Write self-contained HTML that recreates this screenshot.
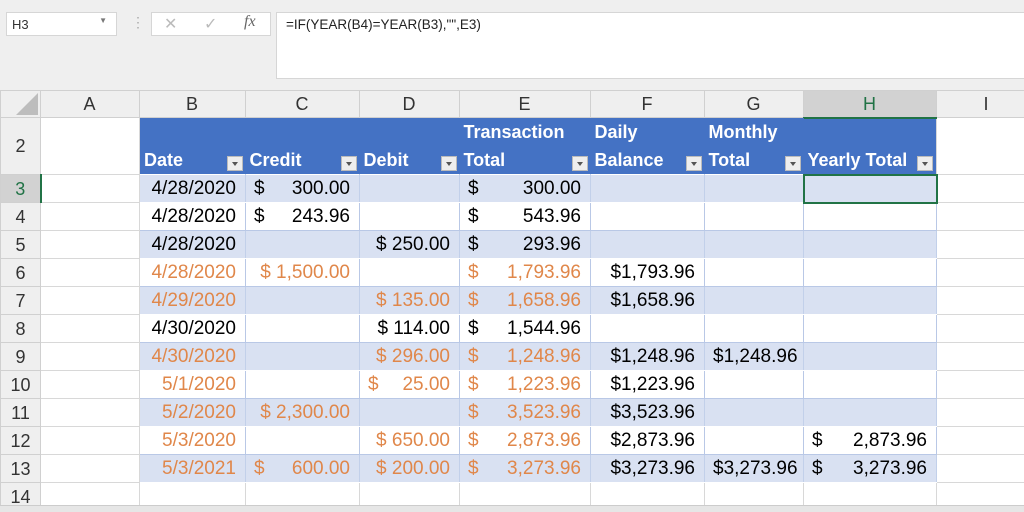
<!DOCTYPE html>
<html><head><meta charset="utf-8"><style>
*{margin:0;padding:0;box-sizing:border-box}
body{width:1024px;height:512px;overflow:hidden;background:#fff;font-family:"Liberation Sans",sans-serif;position:relative}
.top{position:absolute;left:0;top:0;width:1024px;height:92px;background:#efefef}
.nb{position:absolute;left:6px;top:12px;width:111px;height:24px;background:#fff;border:1px solid #d6d6d6;font-size:13px;padding:4px 5px;color:#333}
.nb span{position:absolute;right:9px;top:3px;font-size:8px;color:#777}
.fx{position:absolute;left:151px;top:12px;width:120px;height:24px;background:#fff;border:1px solid #d6d6d6;color:#bbb;font-size:16px}
.fb{position:absolute;left:276px;top:12px;width:760px;height:67px;background:#fff;border:1px solid #d6d6d6;font-size:13.5px;padding:4px 9px;color:#222}
table{position:absolute;left:0;top:90px;width:1036px;border-collapse:collapse;table-layout:fixed;font-size:19px}
td{border:1px solid #d8d8d8;height:28px;white-space:nowrap;overflow:hidden;position:relative;padding:0 9px 0 8px;line-height:26px}
tr.ch td{height:27px;line-height:24px;background:#efefef;text-align:center;color:#333;font-size:18px;border-color:#d0d0d0}
td.rh{background:#efefef;text-align:center;color:#333;font-size:18px;border-color:#d0d0d0;padding:0}
tr.hd td.t{background:#4472c4;color:#fff;font-weight:bold;font-size:18px;border:none;vertical-align:bottom;line-height:28px;padding:0 4px;white-space:normal}
.fl{position:absolute;right:3px;bottom:3px;width:16px;height:15px;background:#eee;border:1px solid #bbb}
.fl:after{content:"";position:absolute;left:4px;top:5px;border:3px solid transparent;border-top:4px solid #555}
tr.b td.t{background:#d9e1f2}
td.t{border-color:#b9c8e6}
tr.b td.t{border-color:#fff #c2d0ea}
.o{color:#e0874a}
.r{text-align:right}
.d{float:left}
</style></head><body>
<div class="top">
<div class="nb">H3<span>▼</span></div>
<div style="position:absolute;left:131px;top:14px;color:#aaa;font-size:14px">⋮</div>
<div class="fx"><span style="position:absolute;left:12px;top:1px">✕</span><span style="position:absolute;left:52px;top:1px">✓</span><span style="position:absolute;left:92px;top:0;color:#666;font-family:'Liberation Serif',serif;font-style:italic">fx</span></div>
<div class="fb">=IF(YEAR(B4)=YEAR(B3),"",E3)</div>
</div>
<table>
<colgroup><col style="width:40px"><col style="width:99px"><col style="width:106px"><col style="width:114px"><col style="width:100px"><col style="width:131px"><col style="width:114px"><col style="width:99px"><col style="width:133px"><col style="width:100px"></colgroup>
<tr class="ch"><td style="position:relative"><div style="position:absolute;right:2px;bottom:2px;border-left:22px solid transparent;border-bottom:22px solid #bdbdbd"></div></td><td>A</td><td>B</td><td>C</td><td>D</td><td>E</td><td>F</td><td>G</td><td style="background:#d2d2d2;color:#217346;border-bottom:2px solid #217346">H</td><td>I</td></tr>
<tr class="hd" style="height:56px"><td class="rh">2</td><td></td><td class="t">Date<div class="fl"></div></td><td class="t">Credit<div class="fl"></div></td><td class="t">Debit<div class="fl"></div></td><td class="t">Transaction Total<div class="fl"></div></td><td class="t">Daily Balance<div class="fl"></div></td><td class="t">Monthly Total<div class="fl"></div></td><td class="t">Yearly Total<div class="fl"></div></td><td></td></tr>
<tr class="b"><td class="rh" style="background:#d2d2d2;color:#217346;border-right:2px solid #217346">3</td><td></td><td class="t r">4/28/2020</td><td class="t r"><span class="d">$</span>300.00</td><td class="t"></td><td class="t r"><span class="d">$</span>300.00</td><td class="t"></td><td class="t"></td><td class="t" style="border:2px solid #217346"></td><td></td></tr>
<tr><td class="rh">4</td><td></td><td class="t r">4/28/2020</td><td class="t r"><span class="d">$</span>243.96</td><td class="t"></td><td class="t r"><span class="d">$</span>543.96</td><td class="t"></td><td class="t"></td><td class="t"></td><td></td></tr>
<tr class="b"><td class="rh">5</td><td></td><td class="t r">4/28/2020</td><td class="t"></td><td class="t r">$ 250.00</td><td class="t r"><span class="d">$</span>293.96</td><td class="t"></td><td class="t"></td><td class="t"></td><td></td></tr>
<tr class="o"><td class="rh">6</td><td></td><td class="t r">4/28/2020</td><td class="t r">$ 1,500.00</td><td class="t"></td><td class="t r"><span class="d">$</span>1,793.96</td><td class="t r" style="color:#000">$1,793.96</td><td class="t"></td><td class="t"></td><td></td></tr>
<tr class="b o"><td class="rh">7</td><td></td><td class="t r">4/29/2020</td><td class="t"></td><td class="t r">$ 135.00</td><td class="t r"><span class="d">$</span>1,658.96</td><td class="t r" style="color:#000">$1,658.96</td><td class="t"></td><td class="t"></td><td></td></tr>
<tr><td class="rh">8</td><td></td><td class="t r">4/30/2020</td><td class="t"></td><td class="t r">$ 114.00</td><td class="t r"><span class="d">$</span>1,544.96</td><td class="t"></td><td class="t"></td><td class="t"></td><td></td></tr>
<tr class="b o"><td class="rh">9</td><td></td><td class="t r">4/30/2020</td><td class="t"></td><td class="t r">$ 296.00</td><td class="t r"><span class="d">$</span>1,248.96</td><td class="t r" style="color:#000">$1,248.96</td><td class="t r" style="color:#000">$1,248.96</td><td class="t"></td><td></td></tr>
<tr class="o"><td class="rh">10</td><td></td><td class="t r">5/1/2020</td><td class="t"></td><td class="t r"><span class="d">$</span>25.00</td><td class="t r"><span class="d">$</span>1,223.96</td><td class="t r" style="color:#000">$1,223.96</td><td class="t"></td><td class="t"></td><td></td></tr>
<tr class="b o"><td class="rh">11</td><td></td><td class="t r">5/2/2020</td><td class="t r">$ 2,300.00</td><td class="t"></td><td class="t r"><span class="d">$</span>3,523.96</td><td class="t r" style="color:#000">$3,523.96</td><td class="t"></td><td class="t"></td><td></td></tr>
<tr class="o"><td class="rh">12</td><td></td><td class="t r">5/3/2020</td><td class="t"></td><td class="t r">$ 650.00</td><td class="t r"><span class="d">$</span>2,873.96</td><td class="t r" style="color:#000">$2,873.96</td><td class="t"></td><td class="t r" style="color:#000"><span class="d">$</span>2,873.96</td><td></td></tr>
<tr class="b o"><td class="rh">13</td><td></td><td class="t r">5/3/2021</td><td class="t r"><span class="d">$</span>600.00</td><td class="t r">$ 200.00</td><td class="t r"><span class="d">$</span>3,273.96</td><td class="t r" style="color:#000">$3,273.96</td><td class="t r" style="color:#000">$3,273.96</td><td class="t r" style="color:#000"><span class="d">$</span>3,273.96</td><td></td></tr>
<tr><td class="rh">14</td><td></td><td></td><td></td><td></td><td></td><td></td><td></td><td></td><td></td></tr>
</table>
<div style="position:absolute;left:0;top:505px;width:1024px;height:7px;background:#e6e6e6;border-top:1px solid #ccc"></div>
</body></html>
